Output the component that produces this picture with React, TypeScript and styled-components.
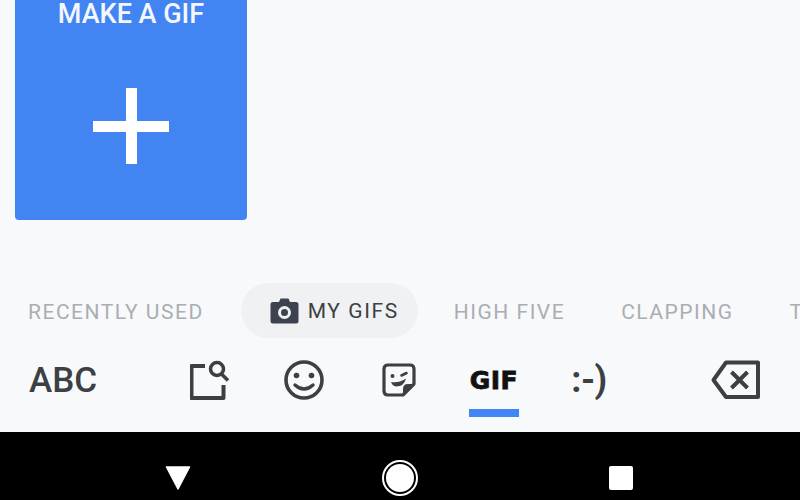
import React from 'react'
import styled, { createGlobalStyle } from 'styled-components'

const GlobalStyle = createGlobalStyle`
  html, body {
    margin: 0;
    padding: 0;
    background: #f8f9fb;
  }
`

const Screen = styled.div`
  width: 800px;
  height: 500px;
  display: flex;
  flex-direction: column;
  overflow: hidden;
  background: #f8f9fb;
  font-family: Roboto, "Liberation Sans", sans-serif;
`

const Gallery = styled.div`
  height: 283px;
  padding-left: 15px;
  flex-shrink: 0;
`

const MakeCard = styled.div`
  width: 232px;
  height: 220px;
  display: flex;
  flex-direction: column;
  align-items: center;
  background: #4384f3;
  border-radius: 0 0 4px 4px;
  color: #f4f8fe;
`

const CardLabel = styled.div`
  height: 28px;
  line-height: 28px;
  font-size: 27px;
  font-weight: 500;
  white-space: nowrap;
`

const PlusIcon = styled.svg`
  width: 76px;
  height: 76px;
  margin-top: 60px;
`

const TabRow = styled.div`
  height: 55px;
  display: flex;
  align-items: center;
  flex-shrink: 0;
  white-space: nowrap;
`

const Tab = styled.div`
  padding: 2px 28px 0;
  font-size: 21px;
  letter-spacing: 1.5px;
  color: #aaaeb2;
  flex-shrink: 0;
`

const ActiveTab = styled.div`
  height: 55px;
  margin: 0 8px 0 9px;
  padding: 0 19px 0 29px;
  display: flex;
  align-items: center;
  gap: 9px;
  flex-shrink: 0;
  border-radius: 28px;
  background: #f0f1f3;
  font-size: 21px;
  letter-spacing: 1.6px;
  color: #3c4043;
`

const Toolbar = styled.div`
  height: 94px;
  display: flex;
  align-items: center;
  flex-shrink: 0;
  padding-bottom: 10px;
  box-sizing: border-box;
`

const AbcKey = styled.div`
  width: 164px;
  padding-left: 29px;
  box-sizing: border-box;
  font-size: 35px;
  font-weight: 500;
  color: #3c4043;
  flex-shrink: 0;
`

const Key = styled.div<{ $width?: number }>`
  position: relative;
  width: ${({ $width }) => $width ?? 94}px;
  height: 42px;
  display: flex;
  align-items: center;
  justify-content: center;
  flex-shrink: 0;
  color: #3c4043;
`

const GifLabel = styled.span`
  font-family: "DejaVu Sans", sans-serif;
  font-size: 25px;
  font-weight: 700;
  letter-spacing: 0.5px;
  color: #111;
  -webkit-text-stroke: 0.8px #111;
`

const ActiveMark = styled.div`
  position: absolute;
  left: 22px;
  bottom: -16px;
  width: 50px;
  height: 8px;
  background: #4285f4;
`

const Smiley = styled.span`
  font-size: 36px;
  font-weight: 700;
  line-height: 42px;
  letter-spacing: -0.5px;
  color: #3c4043;
`

const DeleteKey = styled.div`
  margin-left: auto;
  margin-right: 39px;
  display: flex;
  color: #3c4043;
`

const NavBar = styled.div`
  flex: 1;
  display: flex;
  align-items: center;
  background: #000;
  padding: 24px 0 0 165px;
`

const BackButton = styled.svg`
  width: 26px;
  height: 24px;
`

const HomeButton = styled.div`
  width: 36px;
  height: 36px;
  margin-left: 191px;
  box-sizing: border-box;
  border-radius: 50%;
  border: 2px solid #fff;
  padding: 2px;
  display: flex;
`

const HomeDot = styled.div`
  flex: 1;
  border-radius: 50%;
  background: #fff;
`

const RecentButton = styled.div`
  width: 24px;
  height: 24px;
  margin-left: 191px;
  border-radius: 2px;
  background: #fff;
`

const CameraIcon = () => (
  <svg width="29" height="27" viewBox="0 0 29 27">
    <path
      d="M3 5 H9 L10.5 1.5 H18.5 L20 5 H26 Q28.5 5 28.5 7.5 V24 Q28.5 26.5 26 26.5 H3 Q0.5 26.5 0.5 24 V7.5 Q0.5 5 3 5 Z M14.5 9 A6.5 6.5 0 1 0 14.5 22 A6.5 6.5 0 1 0 14.5 9 Z M14.5 12 A3.5 3.5 0 1 1 14.5 19 A3.5 3.5 0 1 1 14.5 12 Z"
      fill="#3c4250"
      fillRule="evenodd"
    />
  </svg>
)

const SearchBoxIcon = () => (
  <svg width="42" height="42" viewBox="0 0 42 42" fill="none" stroke="currentColor" strokeWidth="4">
    <path d="M15 7 H1.5 V39 H33.5 V26" strokeLinejoin="round" />
    <circle cx="27" cy="10" r="6.5" strokeWidth="3.5" />
    <path d="M31.5 15 L38 21.5" strokeWidth="3.5" />
  </svg>
)

const EmojiIcon = () => (
  <svg width="42" height="42" viewBox="0 0 42 42" fill="none" stroke="currentColor">
    <circle cx="21" cy="21" r="18" strokeWidth="3.6" />
    <circle cx="13.5" cy="16.5" r="2.8" fill="currentColor" stroke="none" />
    <circle cx="28.5" cy="16.5" r="2.8" fill="currentColor" stroke="none" />
    <path d="M12 26 Q21 34 30 26" strokeWidth="3.4" strokeLinecap="round" />
  </svg>
)

const StickerIcon = () => (
  <svg width="34" height="34" viewBox="0 0 34 34" fill="none" stroke="currentColor">
    <path d="M6 2 H28 Q32 2 32 6 V21 L21 32 H6 Q2 32 2 28 V6 Q2 2 6 2 Z" strokeWidth="3.2" strokeLinejoin="round" />
    <path d="M32 21 L21 32 V26 Q21 21 26 21 Z" fill="currentColor" stroke="none" />
    <circle cx="10.5" cy="13" r="2" fill="currentColor" stroke="none" />
    <path d="M19.5 12.5 L24.5 10" strokeWidth="2.6" strokeLinecap="round" />
    <path d="M9 19 Q16 20.5 24 15.5 Q22 23.5 14 23.5 Q10.5 23 9 19 Z" fill="currentColor" stroke="none" />
  </svg>
)

const BackspaceIcon = () => (
  <svg width="50" height="40" viewBox="0 0 50 40" fill="none" stroke="currentColor" strokeWidth="4">
    <path d="M15 2.5 H47 V37 H15 L2.5 20 Z" strokeLinejoin="round" />
    <path d="M20.5 12 L36.5 28 M36.5 12 L20.5 28" />
  </svg>
)

export default function App() {
  return (
    <Screen>
      <GlobalStyle />
      <Gallery>
        <MakeCard>
          <CardLabel>MAKE A GIF</CardLabel>
          <PlusIcon viewBox="0 0 76 76">
            <path d="M33 0 H44 V33 H76 V44 H44 V76 H33 V44 H0 V33 H33 Z" fill="#fff" />
          </PlusIcon>
        </MakeCard>
      </Gallery>
      <TabRow>
        <Tab>RECENTLY USED</Tab>
        <ActiveTab>
          <CameraIcon />
          MY GIFS
        </ActiveTab>
        <Tab>HIGH FIVE</Tab>
        <Tab>CLAPPING</Tab>
        <Tab>THUMBS UP</Tab>
      </TabRow>
      <Toolbar>
        <AbcKey>ABC</AbcKey>
        <Key $width={94}><SearchBoxIcon /></Key>
        <Key $width={92}><EmojiIcon /></Key>
        <Key $width={97}><StickerIcon /></Key>
        <Key>
          <GifLabel>GIF</GifLabel>
          <ActiveMark />
        </Key>
        <Key $width={96}><Smiley>:-)</Smiley></Key>
        <DeleteKey><BackspaceIcon /></DeleteKey>
      </Toolbar>
      <NavBar>
        <BackButton viewBox="0 0 26 24">
          <path d="M1.5 1 H24.5 L13 23 Z" fill="#fff" stroke="#fff" strokeWidth="1.5" strokeLinejoin="round" />
        </BackButton>
        <HomeButton><HomeDot /></HomeButton>
        <RecentButton />
      </NavBar>
    </Screen>
  )
}
